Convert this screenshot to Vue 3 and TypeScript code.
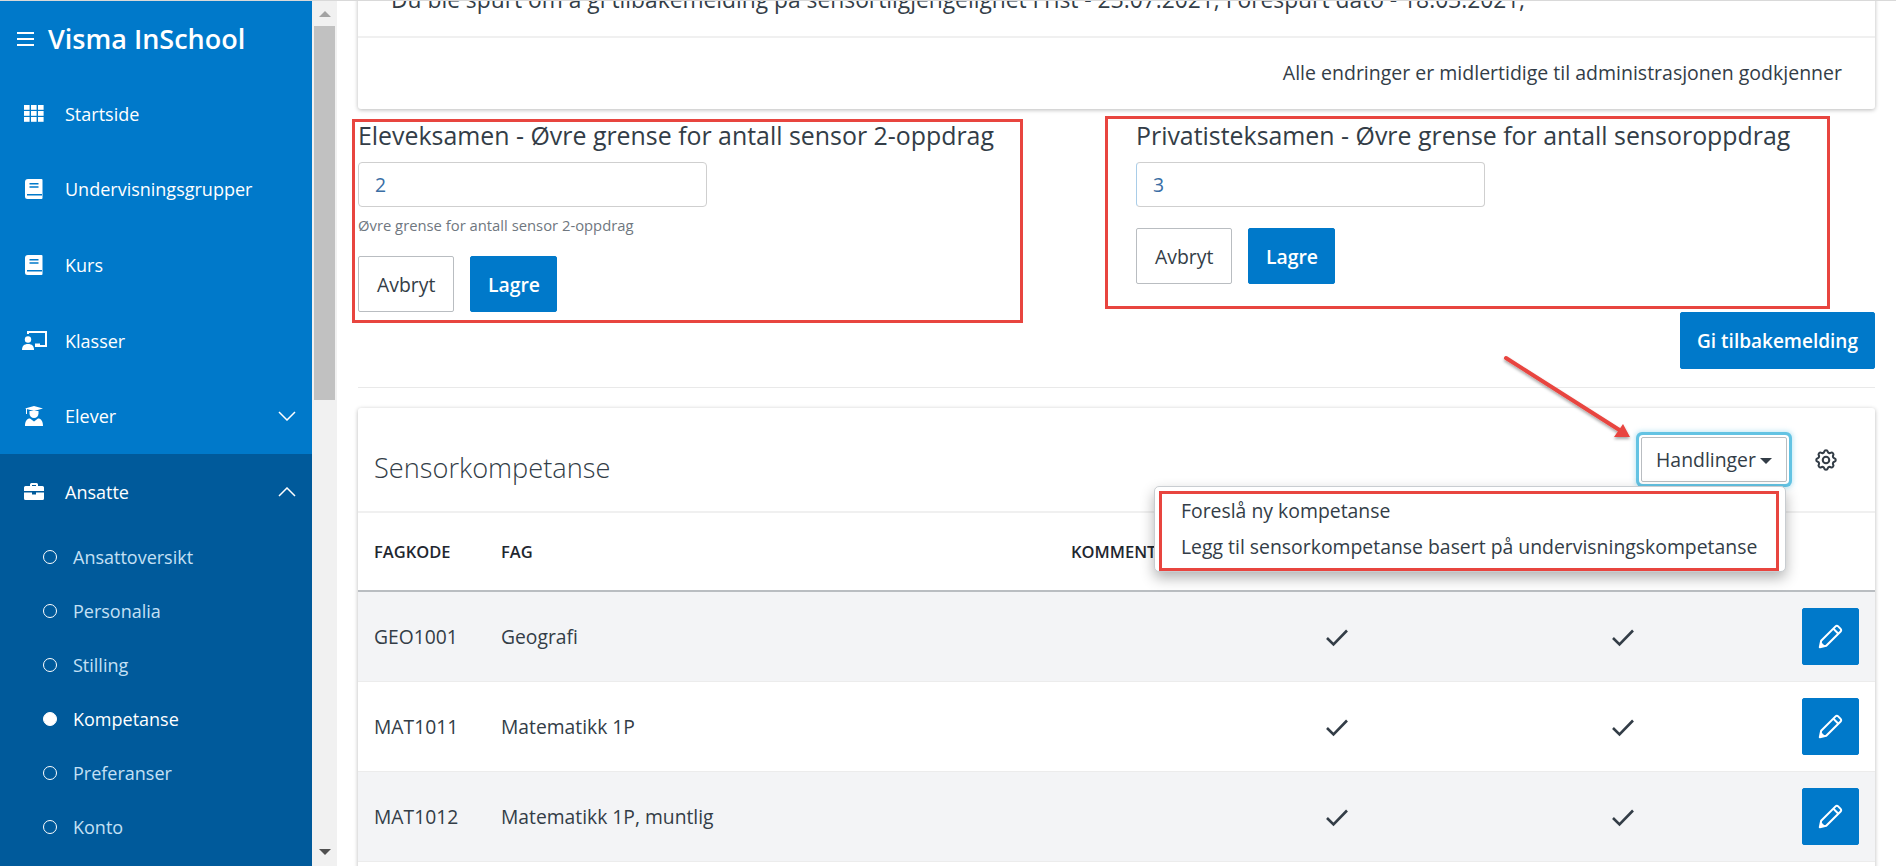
<script setup lang="ts">
interface NavItem { label: string; icon: string; chevron?: boolean }
const navItems: NavItem[] = [
  { label: 'Startside', icon: 'grid' },
  { label: 'Undervisningsgrupper', icon: 'book' },
  { label: 'Kurs', icon: 'book' },
  { label: 'Klasser', icon: 'teacher' },
  { label: 'Elever', icon: 'grad', chevron: true },
]
const subItems = ['Ansattoversikt', 'Personalia', 'Stilling', 'Kompetanse', 'Preferanser', 'Konto']
const rows = [
  { code: 'GEO1001', name: 'Geografi' },
  { code: 'MAT1011', name: 'Matematikk 1P' },
  { code: 'MAT1012', name: 'Matematikk 1P, muntlig' },
]
const gridCells = [0, 1, 2].flatMap((r) => [0, 1, 2].map((c) => ({ x: c * 7, y: r * 6 })))
</script>

<template>
  <div class="app">
    <aside class="sidebar">
      <div class="brand">
        <span class="burger"><i></i><i></i><i></i></span>
        <span class="brand-name">Visma InSchool</span>
      </div>
      <nav>
        <a v-for="item in navItems" :key="item.label" class="nav-item">
          <span class="nav-icon">
            <svg v-if="item.icon === 'grid'" width="20" height="17" viewBox="0 0 20 17" fill="#fff">
              <rect v-for="(c, i) in gridCells" :key="i" :x="c.x" :y="c.y" width="5.6" height="4.8" />
            </svg>
            <svg v-else-if="item.icon === 'book'" width="18" height="20" viewBox="0 0 18 20">
              <path fill="#fff" d="M3 0h13.5a1 1 0 0 1 1 1v18a1 1 0 0 1-1 1H2.5A2.5 2.5 0 0 1 0 17.500V3a3 3 0 0 1 3-3z" />
              <path fill="none" stroke="#0079ca" stroke-width="1.600" d="M4.500 4.800h9M4.500 8h9M2 15.800h15" />
            </svg>
            <svg v-else-if="item.icon === 'teacher'" width="25" height="19" viewBox="0 0 25 19">
              <circle cx="6" cy="8.500" r="3.200" fill="#fff" />
              <path fill="#fff" d="M0 19c0-4 2-6 6-6s6 2 6 6z" />
              <path fill="none" stroke="#fff" stroke-width="2" d="M6 3V1h18v14h-9" />
              <path fill="#fff" d="M13 12.500h5V16h-5z" />
            </svg>
            <svg v-else width="18" height="20" viewBox="0 0 18 20" fill="#fff">
              <path d="M0 2.500 9 0l9 2.500-9 2.500z" />
              <path d="M4.500 5h9v2.500a4.500 4.500 0 0 1-9 0z" />
              <path d="M1 2.500h1V8H1z" />
              <path d="M0 20c0-5 2-7.500 5-7.500l4 3 4-3c3 0 5 2.500 5 7.500z" />
            </svg>
          </span>
          <span class="nav-label">{{ item.label }}</span>
          <svg v-if="item.chevron" class="chev" width="18" height="10" viewBox="0 0 18 10" fill="none" stroke="#fff" stroke-width="1.500"><path d="M1 1l8 8 8-8" /></svg>
        </a>
      </nav>
      <div class="nav-open">
        <a class="nav-item parent">
          <span class="nav-icon">
            <svg width="20" height="17" viewBox="0 0 20 17" fill="#fff">
              <path d="M6 3V1.500A1.500 1.500 0 0 1 7.500 0h5A1.500 1.500 0 0 1 14 1.500V3h4.500A1.500 1.500 0 0 1 20 4.500V8H0V4.500A1.500 1.500 0 0 1 1.500 3zM8 2v1h4V2z" />
              <path d="M0 9.500h8V11.500h4V9.500h8V15.500a1.500 1.500 0 0 1-1.500 1.500h-17A1.500 1.500 0 0 1 0 15.500z" />
            </svg>
          </span>
          <span class="nav-label">Ansatte</span>
          <svg class="chev" width="18" height="10" viewBox="0 0 18 10" fill="none" stroke="#fff" stroke-width="1.500"><path d="M1 9l8-8 8 8" /></svg>
        </a>
        <a v-for="s in subItems" :key="s" class="sub-item" :class="{ active: s === 'Kompetanse' }">
          <span class="dot"></span>
          <span>{{ s }}</span>
        </a>
      </div>
    </aside>

    <div class="scrollbar">
      <span class="arrow up"></span>
      <span class="thumb"></span>
      <span class="arrow down"></span>
    </div>

    <main class="main">
      <section class="notice card">
        <p class="notice-text">Du ble spurt om å gi tilbakemelding på sensortilgjengelighet Frist - 23.07.2021, Forespurt dato - 18.03.2021;</p>
        <p class="notice-foot">Alle endringer er midlertidige til administrasjonen godkjenner</p>
      </section>

      <div class="forms">
        <form class="limit-form first" @submit.prevent>
          <span class="red-box box-a"></span>
          <h3>Eleveksamen - Øvre grense for antall sensor 2-oppdrag</h3>
          <input class="field" value="2" />
          <small>Øvre grense for antall sensor 2-oppdrag</small>
          <div class="btn-row">
            <button class="btn">Avbryt</button>
            <button class="btn primary">Lagre</button>
          </div>
        </form>
        <form class="limit-form second" @submit.prevent>
          <span class="red-box box-b"></span>
          <h3>Privatisteksamen - Øvre grense for antall sensoroppdrag</h3>
          <input class="field tinted" value="3" />
          <div class="btn-row">
            <button class="btn">Avbryt</button>
            <button class="btn primary">Lagre</button>
          </div>
        </form>
      </div>

      <div class="feedback-row">
        <button class="btn primary feedback">Gi tilbakemelding</button>
      </div>
      <hr class="rule" />

      <section class="sensor card">
        <header class="sensor-head">
          <h2>Sensorkompetanse</h2>
          <div class="actions">
            <button class="btn actions-btn">Handlinger<span class="caret"></span></button>
            <ul class="menu">
              <span class="red-box box-c"></span>
              <li>Foreslå ny kompetanse</li>
              <li>Legg til sensorkompetanse basert på undervisningskompetanse</li>
            </ul>
          </div>
          <svg class="gear" width="26" height="26" viewBox="0 0 24 24" fill="none" stroke="#333d47" stroke-width="1.900">
            <path d="M10.325 4.317c.426-1.756 2.924-1.756 3.350 0a1.724 1.724 0 0 0 2.573 1.066c1.543-.94 3.310.826 2.370 2.370a1.724 1.724 0 0 0 1.065 2.572c1.756.426 1.756 2.924 0 3.350a1.724 1.724 0 0 0-1.066 2.573c.94 1.543-.826 3.310-2.370 2.370a1.724 1.724 0 0 0-2.572 1.065c-.426 1.756-2.924 1.756-3.350 0a1.724 1.724 0 0 0-2.573-1.066c-1.543.94-3.310-.826-2.370-2.370a1.724 1.724 0 0 0-1.065-2.572c-1.756-.426-1.756-2.924 0-3.350a1.724 1.724 0 0 0 1.066-2.573c-.94-1.543.826-3.310 2.370-2.370.996.608 2.296.07 2.572-1.065z" />
            <circle cx="12" cy="12" r="3" />
          </svg>
        </header>
        <table class="table">
          <colgroup>
            <col class="c1" /><col class="c2" /><col class="c3" /><col class="c4" /><col class="c5" /><col class="c6" />
          </colgroup>
          <thead>
            <tr>
              <th>FAGKODE</th><th>FAG</th><th>KOMMENTAR</th><th></th><th></th><th></th>
            </tr>
          </thead>
          <tbody>
            <tr v-for="r in rows" :key="r.code">
              <td>{{ r.code }}</td>
              <td>{{ r.name }}</td>
              <td></td>
              <td class="center"><svg width="24" height="19" viewBox="0 0 24 19" fill="none" stroke="#333d47" stroke-width="2.600"><path d="M2 10l6.500 6.500L22 2.500" /></svg></td>
              <td class="center"><svg width="24" height="19" viewBox="0 0 24 19" fill="none" stroke="#333d47" stroke-width="2.600"><path d="M2 10l6.500 6.500L22 2.500" /></svg></td>
              <td class="end">
                <button class="btn primary edit" aria-label="Rediger">
                  <svg width="27" height="27" viewBox="0 0 24 24" fill="none" stroke="#fff" stroke-width="1.800" stroke-linejoin="round">
                    <path d="M2.500 21.500l1.200-5.700L16.500 3a1.600 1.600 0 0 1 2.300 0l2.200 2.200a1.600 1.600 0 0 1 0 2.300L8.200 20.300z" />
                    <path d="M14.500 5l4.500 4.500" />
                    <path fill="#fff" stroke="none" d="M2.500 21.500l1-4.700 3.700 3.700z" />
                  </svg>
                </button>
              </td>
            </tr>
          </tbody>
        </table>
      </section>

      <svg class="arrow-note" width="150" height="100" viewBox="0 0 150 100">
        <defs>
          <filter id="soft" x="-20%" y="-20%" width="140%" height="140%">
            <feDropShadow dx="0" dy="2" stdDeviation="1.500" flood-color="#000" flood-opacity="0.350" />
          </filter>
        </defs>
        <g filter="url(#soft)">
          <path d="M6 8L121 81" stroke="#e8453f" stroke-width="4" stroke-linecap="round" fill="none" />
          <path d="M130 87L114 87 123 74z" fill="#e8453f" />
        </g>
      </svg>
    </main>
  </div>
</template>

<style>
html, body { margin: 0; background: #fff; overflow: hidden; }
</style>

<style scoped>
.app {
  display: flex;
  width: 1896px;
  height: 866px;
  overflow: hidden;
  box-sizing: border-box;
  border-top: 1px solid #d9d9d9;
  font-family: "Open Sans", "Noto Sans", sans-serif;
  color: #333d47;
  background: #fff;
}
.sidebar {
  flex: 0 0 312px;
  display: flex;
  flex-direction: column;
  background: #0079ca;
  color: #fff;
}
.brand {
  height: 75px;
  flex: none;
  display: flex;
  align-items: center;
  gap: 14px;
  padding-left: 17px;
}
.burger { display: flex; flex-direction: column; gap: 4px; width: 17px; }
.burger i { display: block; height: 2px; background: #fff; }
.brand-name { font-size: 27px; font-weight: 600; line-height: 1; }
.nav-item {
  height: 75.6px;
  display: flex;
  align-items: center;
  position: relative;
  font-size: 18px;
  font-weight: 400;
}
.nav-icon { width: 68px; margin-right: -3px; display: flex; justify-content: center; flex: none; }
.nav-icon svg { flex: none; }
.chev { position: absolute; right: 16px; top: calc(50% - 5px); }
.nav-open { flex: 1; background: #005a9b; }
.parent { height: 76px; }
.sub-item {
  height: 54px;
  display: flex;
  align-items: center;
  gap: 16px;
  padding-left: 43px;
  font-size: 18px;
  font-weight: 400;
  color: #c4e0f5;
}
.sub-item.active { color: #fff; font-weight: 500; }
.dot { width: 14px; height: 14px; box-sizing: border-box; border: 1.500px solid #fff; border-radius: 50%; flex: none; }
.active .dot { background: #fff; }

.scrollbar {
  flex: 0 0 25px;
  display: flex;
  flex-direction: column;
  align-items: center;
  background: #f1f1f1;
}
.thumb { width: 21px; height: 374px; background: #c1c1c1; margin-top: 6px; }
.arrow { width: 0; height: 0; border-left: 6px solid transparent; border-right: 6px solid transparent; }
.arrow.up { border-bottom: 6px solid #a3a3a3; margin-top: 10px; margin-bottom: 3px; }
.arrow.down { border-top: 6px solid #505050; margin-top: auto; margin-bottom: 11px; }

.main {
  flex: 1;
  min-width: 0;
  padding: 0 21px;
  position: relative;
  overflow: hidden;
}
.card {
  background: #fff;
  box-shadow: 0 1px 4px rgba(0, 0, 0, 0.28);
  border-radius: 3px;
}
.notice { margin-top: -40px; height: 148px; }
.notice-text {
  margin: 0;
  height: 77px;
  box-sizing: border-box;
  padding: 26px 0 0 33px;
  font-size: 22.800px;
  line-height: 26px;
  white-space: nowrap;
  border-bottom: 2px solid #f0f0f0;
}
.notice-foot {
  margin: 0;
  height: 69px;
  line-height: 69px;
  padding-right: 33px;
  text-align: right;
  font-size: 19.500px;
}
.forms { display: flex; margin-top: 11px; height: 192px; }
.limit-form { position: relative; display: flex; flex-direction: column; align-items: flex-start; }
.limit-form.first { width: 778px; }
.limit-form h3 { margin: 0; font-size: 24.900px; font-weight: 400; line-height: 30px; white-space: nowrap; }
.field {
  width: 349px;
  height: 45px;
  box-sizing: border-box;
  margin-top: 12px;
  border: 1px solid #cfcfcf;
  border-radius: 4px;
  padding: 0 16px;
  font: 400 19.400px "Open Sans", sans-serif;
  color: #3a6ea5;
  outline: none;
}
.field.tinted { border-left-color: #a9cde8; }
small { display: block; margin-top: 8px; font-size: 14.800px; line-height: 20px; color: #6f7780; white-space: nowrap; }
.btn-row { display: flex; gap: 16px; margin-top: 21px; }
.btn {
  height: 56px;
  padding: 0 18px;
  box-sizing: border-box;
  background: #fff;
  border: 1px solid #b9bdc1;
  border-radius: 2px;
  font: 400 19.400px "Open Sans", sans-serif;
  color: #333d47;
  cursor: pointer;
}
.btn.primary { background: #0079ca; border-color: #0079ca; color: #fff; font-weight: 600; padding: 0 16.500px; }
.red-box {
  position: absolute;
  box-sizing: border-box;
  border: 3px solid #e8453f;
  pointer-events: none;
  z-index: 3;
}
.box-a { left: -6px; top: -1px; width: 671px; height: 204px; }
.box-b { left: -31px; top: -4px; width: 725px; height: 193px; }
.box-c { left: 4px; top: 4px; right: 6px; bottom: 0; }
.feedback-row { display: flex; justify-content: flex-end; }
.btn.feedback { width: 195px; height: 57px; padding: 0; font-size: 19px; }
.rule { border: 0; border-top: 1px solid #e9e9e9; margin: 18px 0 20px; }
.sensor { position: relative; min-height: 520px; }
.sensor-head {
  height: 105px;
  display: flex;
  align-items: center;
  padding: 0 16px;
  border-bottom: 2px solid #f0f0f0;
  box-sizing: border-box;
}
.sensor-head h2 { margin: 16px auto 0 0; font-size: 27.200px; font-weight: 300; color: #333d47; }
.actions { position: relative; margin-right: 26px; }
.btn.actions-btn {
  width: 146px;
  height: 45px;
  padding: 0;
  font-weight: 500;
  box-shadow: 0 0 0 2px #fff, 0 0 0 5px #63c3e3, 0 0 5px 6px rgba(99, 195, 227, 0.4);
  display: flex;
  align-items: center;
  justify-content: center;
  gap: 4px;
}
.caret { width: 0; height: 0; border-left: 6px solid transparent; border-right: 6px solid transparent; border-top: 6px solid #333d47; margin-top: 2px; }
.menu {
  position: absolute;
  right: 1px;
  top: 49px;
  width: 632px;
  height: 86px;
  box-sizing: border-box;
  margin: 0;
  padding: 6px 0 0 26px;
  list-style: none;
  background: #fff;
  border: 1px solid #c9cdd1;
  border-radius: 5px;
  box-shadow: 0 6px 14px rgba(0, 0, 0, 0.3);
  z-index: 2;
  font-size: 19.400px;
}
.menu li { height: 36px; line-height: 36px; white-space: nowrap; }
.gear { flex: none; margin-right: 20px; }
.table { width: 100%; border-collapse: collapse; table-layout: fixed; font-size: 19.300px; }
.c1 { width: 127px; }
.c2 { width: 570px; }
.c3 { width: 131px; }
.c4 { width: 302px; }
.c5 { width: 270px; }
.c6 { width: 117px; }
.table th {
  height: 77px;
  padding: 0 16px;
  text-align: left;
  font-size: 16.500px;
  font-weight: 600;
  white-space: nowrap;
  color: #1f2730;
  border-bottom: 2px solid #b9bdc1;
}
.table td { height: 90px; padding: 0 16px; box-sizing: border-box; border-bottom: 1px solid #ececec; white-space: nowrap; }
.table tbody tr:nth-child(odd) { background: #f3f4f6; }
.center { text-align: center; }
.end { text-align: right; }
.center svg { vertical-align: middle; margin-bottom: 2px; }
.btn.edit { width: 57px; height: 57px; padding: 0; vertical-align: middle; }
.edit svg { display: block; margin: auto; }
.arrow-note { position: absolute; left: 1163px; top: 349px; z-index: 4; pointer-events: none; }
</style>
